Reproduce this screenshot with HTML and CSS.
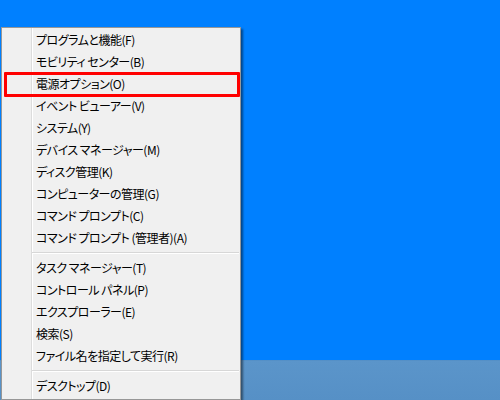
FILE: index.html
```html
<!DOCTYPE html>
<html lang="ja">
<head>
<meta charset="utf-8">
<link rel="stylesheet" href="styles.css">
</head>
<body>
<div class="desktop">
  <div class="wallpaper"></div>
  <div class="taskbar"></div>
  <div class="menu">
    <div class="item">プログラムと機能(F)</div>
    <div class="item">モビリティ センター(B)</div>
    <div class="item marked">電源オプション(O)</div>
    <div class="item">イベント ビューアー(V)</div>
    <div class="item">システム(Y)</div>
    <div class="item">デバイス マネージャー(M)</div>
    <div class="item">ディスク管理(K)</div>
    <div class="item">コンピューターの管理(G)</div>
    <div class="item">コマンド プロンプト(C)</div>
    <div class="item">コマンド プロンプト (管理者)(A)</div>
    <div class="sep"></div>
    <div class="item">タスク マネージャー(T)</div>
    <div class="item">コントロール パネル(P)</div>
    <div class="item">エクスプローラー(E)</div>
    <div class="item">検索(S)</div>
    <div class="item">ファイル名を指定して実行(R)</div>
    <div class="sep"></div>
    <div class="item">デスクトップ(D)</div>
  </div>
</div>
</body>
</html>
```

FILE: styles.css
```css
html, body {
  margin: 0;
  padding: 0;
}
body {
  width: 500px;
  height: 400px;
  overflow: hidden;
  font-family: "Noto Sans CJK JP", "Noto Sans", sans-serif;
}
.desktop {
  position: relative;
  width: 500px;
  height: 400px;
  display: flex;
  flex-direction: column;
}
.wallpaper {
  flex: 1;
  background: #0080ff;
}
.taskbar {
  height: 40px;
  background: linear-gradient(to bottom, #4f8bc3 0, #5b95ca 1px, #5690c6 100%);
}
.menu {
  position: absolute;
  left: 1px;
  top: 27px;
  width: 238px;
  height: 370px;
  padding: 1px 0 0 0;
  border: 1px solid #979797;
  background-color: #f0f0f0;
  background-image: linear-gradient(to right, transparent 29px, #dcdcdc 29px, #dcdcdc 30px, #ffffff 30px, #ffffff 31px, transparent 31px);
  box-shadow: 2px 2px 2px rgba(0, 0, 0, 0.45);
}
.item {
  position: relative;
  height: 22px;
  line-height: 22px;
  padding-left: 34px;
  font-size: 12px;
  letter-spacing: -0.5px;
  color: #000;
  font-feature-settings: "palt";
  white-space: nowrap;
}
.item.marked::after {
  content: "";
  position: absolute;
  left: 2px;
  right: 0;
  top: -1px;
  bottom: -2px;
  border: 3px solid #ff0000;
  border-radius: 1px;
}
.sep {
  height: 8px;
  margin-left: 30px;
  margin-right: 1px;
  background: linear-gradient(to bottom, transparent 3px, #d7d7d7 3px, #d7d7d7 4px, #ffffff 4px, #ffffff 5px, transparent 5px);
}
```
